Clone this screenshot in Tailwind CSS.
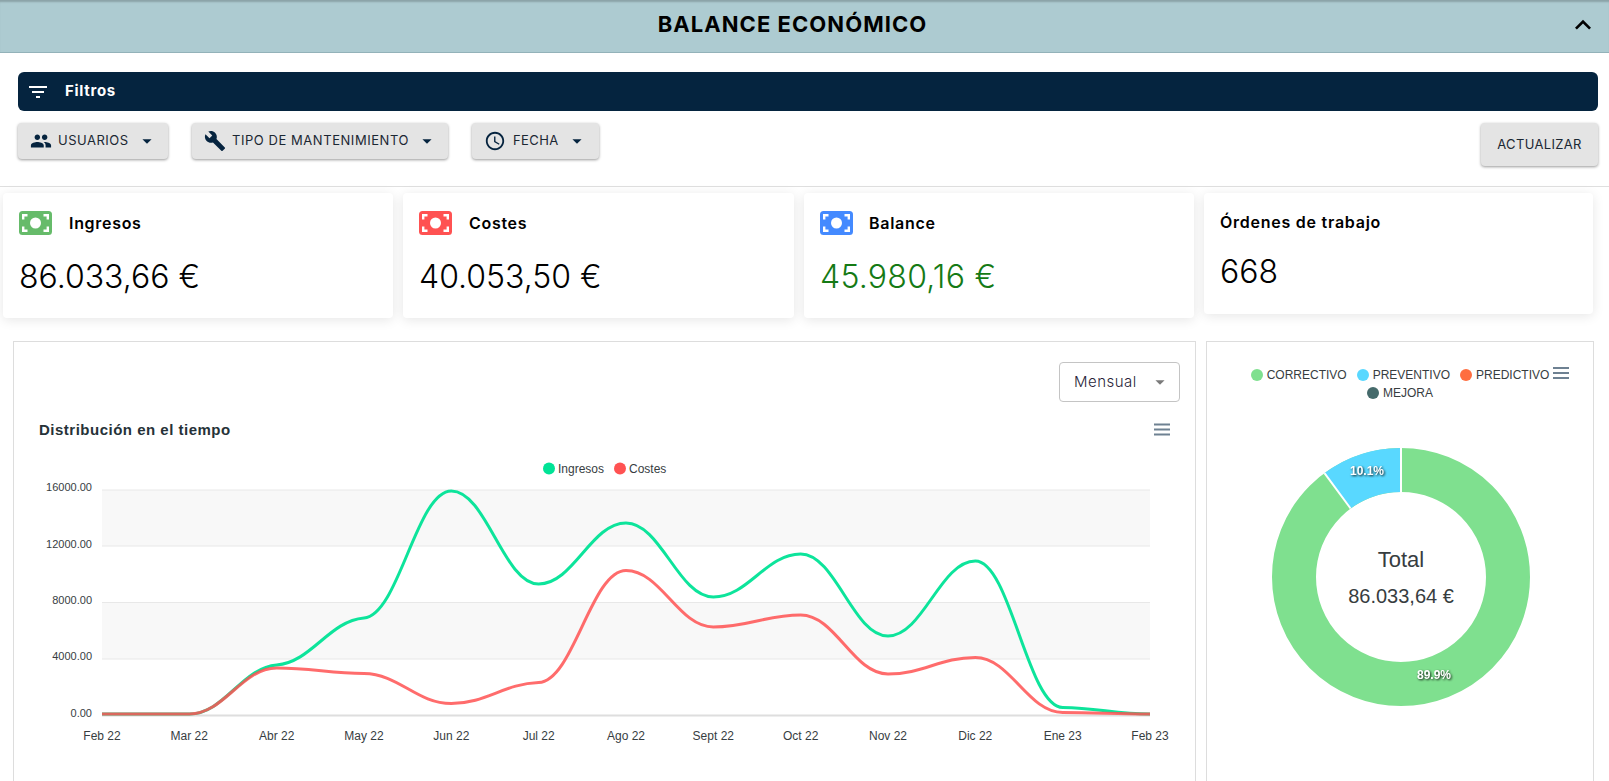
<!doctype html>
<html lang="es">
<head>
<meta charset="utf-8">
<title>Balance económico</title>
<script src="https://cdn.jsdelivr.net/npm/@tailwindcss/browser@4"></script>
</head>
<body class="h-[781px] overflow-hidden bg-white font-['Inter',sans-serif] text-black">

<!-- cabecera -->
<div class="relative flex h-[53px] items-center justify-center border-b border-[#93b2b9] bg-[#adcbd1] pb-[4px] pr-[24px] shadow-[inset_0_3px_2px_-1px_rgba(0,0,0,0.2)]">
  <h1 class="text-[22px] font-bold tracking-[1.05px]">BALANCE ECONÓMICO</h1>
  <svg class="absolute right-[10px] top-[9px] h-[32px] w-[32px]" viewBox="0 0 24 24"><path d="M12 8l-6 6 1.41 1.41L12 10.83l4.59 4.58L18 14z"/></svg>
</div>

<!-- filtros -->
<div class="h-[134px] border-b border-[#dfdfdf] pl-[18px] pr-[11px] pt-[19px]">
  <div class="flex h-[39px] items-center rounded-md bg-[#05243f] pl-[8px] text-white">
    <svg class="h-[24px] w-[24px]" viewBox="0 0 24 24" fill="white"><path d="M10 18h4v-2h-4v2zM3 6v2h18V6H3zm3 7h12v-2H6v2z"/></svg>
    <span class="ml-[15px] text-[15px] font-bold tracking-[0.7px]">Filtros</span>
  </div>
  <div class="mt-[12px] flex items-start">
    <button class="flex h-[36px] w-[150px] items-center rounded bg-[#e4e4e4] pl-[12px] text-[13px] tracking-[0.5px] text-[#1b2733] shadow-[0_1px_3px_rgba(0,0,0,0.4)]">
      <svg class="h-[22px] w-[22px]" viewBox="0 0 24 24" fill="#06243f"><path d="M16 11c1.66 0 2.99-1.34 2.99-3S17.66 5 16 5c-1.66 0-3 1.34-3 3s1.34 3 3 3zm-8 0c1.66 0 2.99-1.34 2.99-3S9.66 5 8 5C6.34 5 5 6.34 5 8s1.34 3 3 3zm0 2c-2.33 0-7 1.17-7 3.5V19h14v-2.5c0-2.33-4.67-3.5-7-3.5zm8 0c-.29 0-.62.02-.97.05 1.16.84 1.97 1.97 1.97 3.45V19h6v-2.5c0-2.33-4.67-3.5-7-3.5z"/></svg>
      <span class="ml-[6px]">USUARIOS</span>
      <svg class="ml-[7px] h-[22px] w-[22px]" viewBox="0 0 24 24" fill="#06243f"><path d="M7 10l5 5 5-5z"/></svg>
    </button>
    <button class="ml-[24px] flex h-[36px] w-[256px] items-center rounded bg-[#e4e4e4] pl-[12px] text-[13px] tracking-[0.55px] text-[#1b2733] shadow-[0_1px_3px_rgba(0,0,0,0.4)]">
      <svg class="h-[22px] w-[22px]" viewBox="0 0 24 24" fill="#06243f"><path d="M22.7 19l-9.1-9.1c.9-2.3.4-5-1.5-6.9-2-2-5-2.4-7.4-1.3L9 6 6 9 1.6 4.7C.4 7.1.9 10.1 2.9 12.1c1.9 1.9 4.6 2.4 6.9 1.5l9.1 9.1c.4.4 1 .4 1.4 0l2.3-2.3c.5-.4.5-1.1.1-1.4z"/></svg>
      <span class="ml-[6px]">TIPO DE MANTENIMIENTO</span>
      <svg class="ml-[7px] h-[22px] w-[22px]" viewBox="0 0 24 24" fill="#06243f"><path d="M7 10l5 5 5-5z"/></svg>
    </button>
    <button class="ml-[24px] flex h-[36px] w-[127px] items-center rounded bg-[#e4e4e4] pl-[12px] text-[13px] tracking-[0.4px] text-[#1b2733] shadow-[0_1px_3px_rgba(0,0,0,0.4)]">
      <svg class="h-[22px] w-[22px]" viewBox="0 0 24 24" fill="#06243f"><path d="M11.99 2C6.47 2 2 6.48 2 12s4.47 10 9.99 10C17.52 22 22 17.52 22 12S17.52 2 11.99 2zM12 20c-4.42 0-8-3.58-8-8s3.58-8 8-8 8 3.58 8 8-3.58 8-8 8zm.5-13H11v6l5.25 3.15.75-1.23-4.5-2.67z"/></svg>
      <span class="ml-[7px]">FECHA</span>
      <svg class="ml-[7px] h-[22px] w-[22px]" viewBox="0 0 24 24" fill="#06243f"><path d="M7 10l5 5 5-5z"/></svg>
    </button>
    <button class="ml-auto h-[43px] w-[117px] rounded bg-[#e4e4e4] text-[13px] tracking-[0.35px] text-[#1b2733] shadow-[0_1px_3px_rgba(0,0,0,0.4)]">ACTUALIZAR</button>
  </div>
</div>

<!-- tarjetas -->
<div class="flex items-start gap-[10px] pl-[3px] pt-[6px]">
  <div class="h-[125px] w-[390px] rounded bg-white px-[16px] pt-[18px] shadow-[0_2px_12px_rgba(0,0,0,0.1)]">
    <div class="flex items-center">
      <svg class="h-[24px] w-[33px]" viewBox="0 0 33 24"><rect width="33" height="24" rx="3.5" fill="#66bb6a"/><circle cx="16.5" cy="12" r="5.5" fill="white"/><path d="M4.2 8.5V4.2h4.3M28.8 8.5V4.2h-4.3M4.2 15.5v4.3h4.3M28.8 15.5v4.3h-4.3" fill="none" stroke="white" stroke-width="2.4"/></svg>
      <span class="ml-[17px] text-[16px] font-semibold tracking-[0.7px]">Ingresos</span>
    </div>
    <div class="mt-[18px] text-[32px] font-light">86.033,66 €</div>
  </div>
  <div class="h-[125px] w-[391px] rounded bg-white px-[16px] pt-[18px] shadow-[0_2px_12px_rgba(0,0,0,0.1)]">
    <div class="flex items-center">
      <svg class="h-[24px] w-[33px]" viewBox="0 0 33 24"><rect width="33" height="24" rx="3.5" fill="#ff5252"/><circle cx="16.5" cy="12" r="5.5" fill="white"/><path d="M4.2 8.5V4.2h4.3M28.8 8.5V4.2h-4.3M4.2 15.5v4.3h4.3M28.8 15.5v4.3h-4.3" fill="none" stroke="white" stroke-width="2.4"/></svg>
      <span class="ml-[17px] text-[16px] font-semibold tracking-[0.7px]">Costes</span>
    </div>
    <div class="mt-[18px] text-[32px] font-light">40.053,50 €</div>
  </div>
  <div class="h-[125px] w-[390px] rounded bg-white px-[16px] pt-[18px] shadow-[0_2px_12px_rgba(0,0,0,0.1)]">
    <div class="flex items-center">
      <svg class="h-[24px] w-[33px]" viewBox="0 0 33 24"><rect width="33" height="24" rx="3.5" fill="#448aff"/><circle cx="16.5" cy="12" r="5.5" fill="white"/><path d="M4.2 8.5V4.2h4.3M28.8 8.5V4.2h-4.3M4.2 15.5v4.3h4.3M28.8 15.5v4.3h-4.3" fill="none" stroke="white" stroke-width="2.4"/></svg>
      <span class="ml-[16px] text-[16px] font-semibold tracking-[0.7px]">Balance</span>
    </div>
    <div class="mt-[18px] text-[32px] font-light tracking-[0.25px] text-[#157a15]">45.980,16 €</div>
  </div>
  <div class="h-[121px] w-[389px] rounded bg-white px-[16px] pt-[17px] shadow-[0_2px_12px_rgba(0,0,0,0.1)]">
    <div class="text-[16px] font-semibold tracking-[0.75px]">Órdenes de trabajo</div>
    <div class="mt-[14px] text-[32px] font-light">668</div>
  </div>
</div>

<!-- graficas -->
<div class="flex items-start gap-[10px] pl-[13px] pt-[23px]">
  <div class="relative h-[500px] w-[1183px] border border-[#dddddd]">
    <div class="absolute left-[1045px] top-[20px] flex h-[40px] w-[121px] items-center rounded border border-[#c4c4c4] pl-[14px] text-[15px] font-light tracking-[0.5px] text-[#2a1f3a]">
      Mensual
      <svg class="absolute right-[8px] top-[8px] h-[22px] w-[22px]" viewBox="0 0 24 24" fill="#7a7a7a"><path d="M7 10l5 5 5-5z"/></svg>
    </div>
    <svg id="lineChart" class="font-['Liberation_Sans',sans-serif]" width="1180" height="440" viewBox="14 342 1180 440">
      <text x="39" y="435" font-size="15" font-weight="700" fill="#263238" letter-spacing="0.5">Distribución en el tiempo</text>
      <g stroke="#6e8192" stroke-width="2"><path d="M1154 424.5h16M1154 429.5h16M1154 434.5h16"/></g>
      <circle cx="549" cy="468.5" r="6" fill="#00e396"/>
      <text x="558" y="472.5" font-size="12" fill="#373d3f">Ingresos</text>
      <circle cx="620" cy="468.5" r="6" fill="#ff5252"/>
      <text x="629" y="472.5" font-size="12" fill="#373d3f">Costes</text>
      <rect x="102" y="490" width="1048" height="56" fill="#f8f8f8"/>
      <rect x="102" y="602" width="1048" height="57" fill="#f8f8f8"/>
      <g stroke="#e8e8e8"><path d="M102 490h1048M102 546h1048M102 602.5h1048M102 659h1048"/></g>
      <path d="M102 715.5h1048" stroke="#dedede" stroke-width="2"/>
      <g font-size="11" fill="#373d3f" text-anchor="end">
        <text x="92" y="491">16000.00</text>
        <text x="92" y="548">12000.00</text>
        <text x="92" y="604">8000.00</text>
        <text x="92" y="660">4000.00</text>
        <text x="92" y="717">0.00</text>
      </g>
      <g font-size="12" fill="#373d3f" text-anchor="middle">
        <text x="102" y="740">Feb 22</text>
        <text x="189.3" y="740">Mar 22</text>
        <text x="276.7" y="740">Abr 22</text>
        <text x="364" y="740">May 22</text>
        <text x="451.3" y="740">Jun 22</text>
        <text x="538.7" y="740">Jul 22</text>
        <text x="626" y="740">Ago 22</text>
        <text x="713.3" y="740">Sept 22</text>
        <text x="800.7" y="740">Oct 22</text>
        <text x="888" y="740">Nov 22</text>
        <text x="975.3" y="740">Dic 22</text>
        <text x="1062.7" y="740">Ene 23</text>
        <text x="1150" y="740">Feb 23</text>
      </g>
      <path id="serieIngresos" fill="none" stroke="#00e396" stroke-width="3" stroke-opacity="0.95"/>
      <path id="serieCostes" fill="none" stroke="#ff5252" stroke-width="3" stroke-opacity="0.85"/>
    </svg>
  </div>

  <div class="relative h-[500px] w-[388px] border border-[#dddddd]">
    <div class="mx-auto flex w-[340px] flex-wrap justify-center pt-[24px] font-['Liberation_Sans',sans-serif] text-[12px] leading-[18px] text-[#373d3f]">
      <span class="flex items-center"><i class="mr-[4px] h-[12px] w-[12px] rounded-full bg-[#7fe08f]"></i>CORRECTIVO</span>
      <span class="ml-[10px] flex items-center"><i class="mr-[4px] h-[12px] w-[12px] rounded-full bg-[#59d8ff]"></i>PREVENTIVO</span>
      <span class="ml-[10px] flex items-center"><i class="mr-[4px] h-[12px] w-[12px] rounded-full bg-[#ff6e40]"></i>PREDICTIVO</span>
      <span class="flex items-center"><i class="mr-[4px] h-[12px] w-[12px] rounded-full bg-[#456a6b]"></i>MEJORA</span>
    </div>
    <svg class="absolute right-[24px] top-[24px] h-[14px] w-[16px]" viewBox="0 0 16 14" stroke="#6e8192" stroke-width="2"><path d="M0 2h16M0 7h16M0 12h16"/></svg>
    <svg class="absolute left-[0] top-[92px] font-['Liberation_Sans',sans-serif]" width="386" height="290" viewBox="1207 434 386 290">
      <circle cx="1401" cy="577" r="107" fill="none" stroke="#7fe08f" stroke-width="44"/>
      <path d="M1401 448A129 129 0 0 0 1324.5 473.1L1350.6 508.5A85 85 0 0 1 1401 492Z" fill="#59d8ff"/>
      <path d="M1401 448V492M1324.5 473.1L1350.6 508.5" stroke="white" stroke-width="2"/>
      <text x="1401" y="567" font-size="22" fill="#373d3f" text-anchor="middle">Total</text>
      <text x="1401" y="603" font-size="20" fill="#373d3f" text-anchor="middle">86.033,64 €</text>
      <g font-size="12" font-weight="700" fill="white" text-anchor="middle" class="drop-shadow-[1px_1px_1px_rgba(0,0,0,0.85)]">
        <text x="1367" y="475">10.1%</text>
        <text x="1434" y="679">89.9%</text>
      </g>
    </svg>
  </div>
</div>

<script>
// curvas de la grafica, en pixeles de y para cada mes
var ingresos = [714, 714, 665, 618, 491, 584, 523, 597, 554, 636, 561, 707.5, 714];
var costes = [714, 714, 668, 673.5, 703.5, 682.5, 570.5, 627, 615, 674, 657.5, 712.5, 714];

function curva(ys) {
  var dx = 1048 / 12;
  var tan = ys.map(function (y, i) {
    if (i == 0 || i == ys.length - 1) return 0;
    var a = y - ys[i - 1], b = ys[i + 1] - y;
    if (a * b <= 0) return 0;
    return Math.sign(a) * Math.min(Math.abs(a), Math.abs(b)) * 0.15;
  });
  var d = "M102 " + ys[0];
  for (var i = 1; i < ys.length; i++) {
    var x0 = 102 + dx * (i - 1), x1 = x0 + dx;
    d += " C" + (x0 + dx * 0.4) + " " + (ys[i - 1] + tan[i - 1] * 0.4) + " " + (x1 - dx * 0.4) + " " + (ys[i] - tan[i] * 0.4) + " " + x1 + " " + ys[i];
  }
  return d;
}
document.getElementById("serieIngresos").setAttribute("d", curva(ingresos));
document.getElementById("serieCostes").setAttribute("d", curva(costes));
</script>
</body>
</html>
